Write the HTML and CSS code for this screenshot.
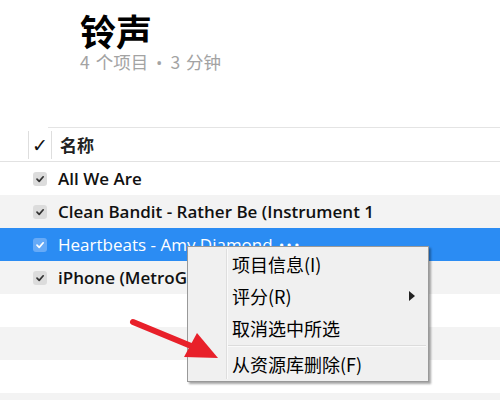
FILE: index.html
```html
<!DOCTYPE html>
<html lang="zh">
<head>
<meta charset="utf-8">
<link rel="stylesheet" href="styles.css">
</head>
<body>
<div class="page">
  <header class="head">
    <h1 class="title">铃声</h1>
    <div class="sub">4 个项目 <span class="bullet">•</span> 3 分钟</div>
  </header>
  <div class="topline"></div>
  <div class="thead">
    <div class="th-gap"></div>
    <div class="th-check"><span class="tick">✓</span></div>
    <div class="th-name">名称</div>
  </div>
  <div class="rows">
    <div class="row"><span class="cb"><svg viewBox="0 0 14 14"><path d="M4 7.2 L6.2 9.4 L10.2 4.8" /></svg></span><span class="name">All We Are</span></div>
    <div class="row alt"><span class="cb"><svg viewBox="0 0 14 14"><path d="M4 7.2 L6.2 9.4 L10.2 4.8" /></svg></span><span class="name">Clean Bandit - Rather Be (Instrument 1</span></div>
    <div class="row sel"><span class="cb"><svg viewBox="0 0 14 14"><path d="M4 7.2 L6.2 9.4 L10.2 4.8" /></svg></span><span class="name">Heartbeats - Amy Diamond</span><span class="dots">•••</span></div>
    <div class="row alt"><span class="cb"><svg viewBox="0 0 14 14"><path d="M4 7.2 L6.2 9.4 L10.2 4.8" /></svg></span><span class="name">iPhone (MetroGnome)</span></div>
    <div class="row"></div>
    <div class="row alt"></div>
    <div class="row"></div>
    <div class="row alt"></div>
  </div>

  <div class="menu">
    <div class="item">项目信息(I)</div>
    <div class="item">评分(R)<span class="sub-arrow"></span></div>
    <div class="item">取消选中所选</div>
    <div class="sep"></div>
    <div class="item">从资源库删除(F)</div>
  </div>

  <svg class="arrow" width="120" height="70" viewBox="0 0 120 70">
    <line x1="13" y1="12" x2="76" y2="38" stroke="#e8202a" stroke-width="6" stroke-linecap="round"/>
    <polygon points="77,23 64,47 98,48" fill="#e8202a"/>
  </svg>
</div>
</body>
</html>
```
FILE: styles.css
```css
html, body {
  margin: 0;
  padding: 0;
  background: #fff;
}
body {
  font-family: "Open Sans", "Noto Sans CJK SC", sans-serif;
  color: #111;
}
.page {
  position: relative;
  width: 500px;
  height: 400px;
  overflow: hidden;
}
.head {
  height: 127px;
  box-sizing: border-box;
  padding: 10px 0 0 80px;
}
.title {
  margin: 0;
  font-family: "Noto Sans CJK SC", sans-serif;
  font-size: 36px;
  font-weight: 700;
  line-height: 40px;
  color: #000;
}
.sub {
  font-family: "Noto Sans CJK SC", sans-serif;
  font-size: 17.5px;
  line-height: 24px;
  color: #a3a3a3;
  word-spacing: 2px;
}
.bullet {
  font-family: "Open Sans", sans-serif;
  font-size: 17px;
  margin: 0 2px;
}
.topline {
  margin-left: 48px;
  border-top: 1px solid #e4e4e4;
}
.thead {
  display: flex;
  align-items: center;
  height: 33px;
  border-bottom: 1px solid #e2e2e2;
}
.th-gap {
  width: 28px;
}
.th-check {
  width: 22px;
  height: 28px;
  border-left: 1px solid #dedede;
  border-right: 1px solid #dedede;
  display: flex;
  align-items: center;
  justify-content: center;
}
.tick {
  font-family: "DejaVu Sans", sans-serif;
  font-size: 19px;
  font-weight: 700;
  color: #111;
}
.th-name {
  padding-left: 8px;
  font-family: "Noto Sans CJK SC", sans-serif;
  font-size: 17px;
  font-weight: 700;
  color: #222;
}
.rows {
  display: flex;
  flex-direction: column;
}
.row {
  height: 33px;
  flex: none;
  display: flex;
  align-items: center;
  background: #fff;
  white-space: nowrap;
}
.row.alt {
  background: #f3f3f3;
}
.row.sel {
  background: #2b8cf3;
  color: #fff;
}
.cb {
  width: 14px;
  height: 14px;
  margin-left: 33px;
  margin-right: 11px;
  border-radius: 3px;
  background: #dcdcdc;
  display: flex;
}
.cb svg {
  width: 14px;
  height: 14px;
}
.cb path {
  fill: none;
  stroke: #333;
  stroke-width: 1.7;
  stroke-linecap: round;
  stroke-linejoin: round;
}
.row.sel .cb {
  background: #66aaf7;
}
.row.sel .cb path {
  stroke: #fff;
}
.name {
  font-size: 17px;
  font-weight: 600;
}
.row.sel .name {
  font-weight: 500;
}
.dots {
  margin-left: 6px;
  font-size: 15px;
  letter-spacing: 2px;
}
.arrow {
  position: absolute;
  left: 120px;
  top: 310px;
}
.menu {
  position: absolute;
  left: 187px;
  top: 246px;
  width: 242px;
  height: 136px;
  box-sizing: border-box;
  border: 1px solid #999;
  background: #f0f0f0;
  padding: 1px 0;
  box-shadow: 2px 2px 2px rgba(0, 0, 0, 0.35);
  font-family: "Noto Sans CJK SC", sans-serif;
  font-size: 18px;
  color: #000;
}
.menu::before {
  content: "";
  position: absolute;
  left: 38px;
  top: 2px;
  bottom: 2px;
  border-left: 1px solid #dedede;
  border-right: 1px solid #fafafa;
}
.item {
  position: relative;
  height: 32px;
  line-height: 32px;
  padding-left: 44px;
}
.sep {
  margin: 1px 2px 1px 40px;
  border-top: 1px solid #dcdcdc;
  border-bottom: 1px solid #fafafa;
}
.sub-arrow {
  position: absolute;
  left: 221px;
  top: 11px;
  width: 0;
  height: 0;
  border-left: 6px solid #222;
  border-top: 5px solid transparent;
  border-bottom: 5px solid transparent;
}
```
